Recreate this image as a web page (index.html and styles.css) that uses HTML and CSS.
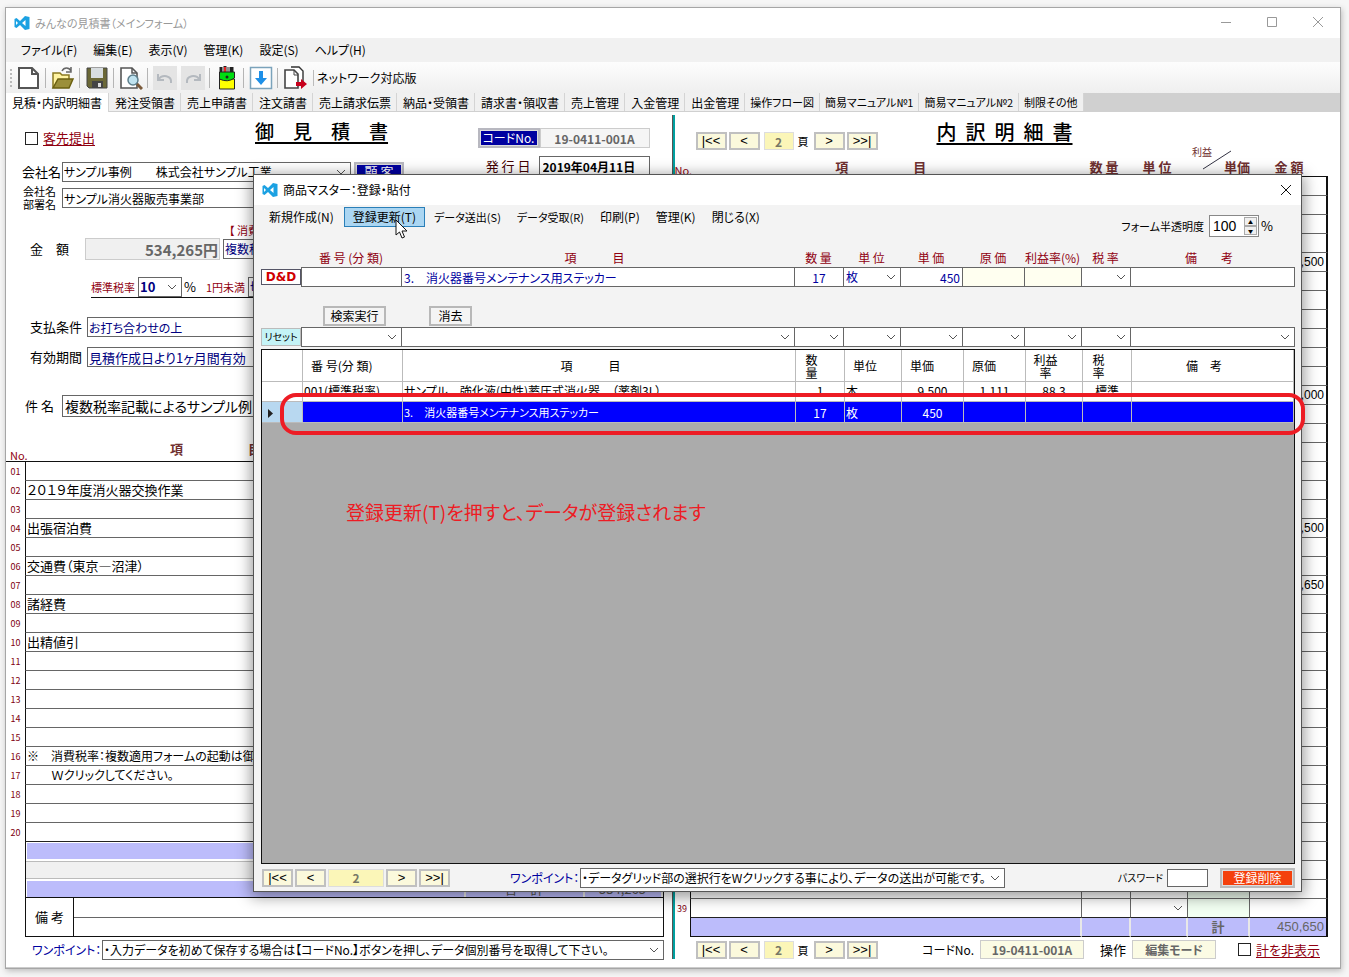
FILE: index.html
```html
<!DOCTYPE html>
<html lang="ja">
<head>
<meta charset="utf-8">
<title>みんなの見積書（メインフォーム）</title>
<link rel="stylesheet" href="styles.css">
</head>
<body>
<main class="window">
  <header class="titlebar">
    <svg class="logo" viewBox="0 0 16 16" width="16" height="16"><path fill="#1ba1e2" fill-rule="evenodd" d="M11 1 15.500 2v12L11 15 6 10 2.500 13 .5 12V4L2.500 3 6 6zM11.500 5 8 8l3.500 3zM2 6v4l2-2z"/></svg>
    <span class="titlebar-text">みんなの見積書（メインフォーム）</span>
    <div class="win-buttons">
      <button class="win-button" aria-label="最小化"><svg width="12" height="12"><path d="M1 6.500h10"/></svg></button>
      <button class="win-button" aria-label="最大化"><svg width="12" height="12"><path d="M1.500 1.500h9v9h-9z"/></svg></button>
      <button class="win-button" aria-label="閉じる"><svg width="12" height="12"><path d="M1 1l10 10M11 1L1 11"/></svg></button>
    </div>
  </header>

  <nav class="menubar">
    <button class="menu-item">ファイル(F)</button>
    <button class="menu-item">編集(E)</button>
    <button class="menu-item">表示(V)</button>
    <button class="menu-item">管理(K)</button>
    <button class="menu-item">設定(S)</button>
    <button class="menu-item">ヘルプ(H)</button>
  </nav>

  <div class="toolbar">
    <span class="grip"></span>
    <button class="tool" aria-label="新規"><svg width="24" height="24" viewBox="0 0 24 24"><path d="M2 2h13l6 6v14H2z" fill="#fff" stroke="#555" stroke-width="2"/><path d="M15 2v6h6" fill="none" stroke="#555" stroke-width="2"/></svg></button>
    <button class="tool" aria-label="開く"><svg width="24" height="24" viewBox="0 0 24 24"><path d="M2 22V7h7l2 2h7v4" fill="#fff3a0" stroke="#8a7a20" stroke-width="1.500"/><path d="M2 22l5-9h15l-4 9z" fill="#9b8f3a" stroke="#6b6010" stroke-width="1.500"/><path d="M11 5c2-4 7-4 9 0M20 1v5h-5" fill="none" stroke="#666" stroke-width="1.500"/></svg></button>
    <button class="tool" aria-label="保存"><svg width="24" height="24" viewBox="0 0 24 24"><path d="M2 2h20v20H4l-2-2z" fill="#6b6837" stroke="#444"/><path d="M6 2h12v10H6z" fill="#d8dde0"/><path d="M7 15h11v7H7z" fill="#444"/><path d="M13 17h3v4h-3z" fill="#ddd"/></svg></button>
    <button class="tool" aria-label="プレビュー"><svg width="24" height="24" viewBox="0 0 24 24"><path d="M2 2h11l5 5v15H2z" fill="#fff" stroke="#555" stroke-width="1.600"/><path d="M13 2v5h5" fill="none" stroke="#555" stroke-width="1.500"/><circle cx="14" cy="14" r="5" fill="#bfe3f0" stroke="#5e7f8c" stroke-width="1.500"/><path d="M18 18l5 5" stroke="#7a5a3a" stroke-width="3"/></svg></button>
    <button class="tool tool-off" disabled aria-label="元に戻す"><svg width="24" height="24" viewBox="0 0 24 24"><path d="M5 8v6h6M5 14c4-6 14-5 13 3" fill="none" stroke="#b4b9bf" stroke-width="2"/></svg></button>
    <button class="tool tool-off tool-next" disabled aria-label="やり直し"><svg width="24" height="24" viewBox="0 0 24 24"><path d="M19 8v6h-6M19 14C15 8 5 9 6 17" fill="none" stroke="#b4b9bf" stroke-width="2"/></svg></button>
    <button class="tool" aria-label="筆箱"><svg width="24" height="24" viewBox="0 0 24 24"><path d="M6 1v6M10 0v7M14 1v6M17 1v6" stroke="#222" stroke-width="3"/><path d="M10 1v5" stroke="#e22" stroke-width="2"/><path d="M14 1v5" stroke="#fff"/><path d="M4.500 13h15v10h-15z" fill="#ff0" stroke="#222"/><path d="M4.500 6h15v6q-7 5-15 1z" fill="#0d1" stroke="#222"/><circle cx="12" cy="11" r="1.500" fill="#222"/></svg></button>
    <button class="tool" aria-label="取り込み"><svg width="24" height="24" viewBox="0 0 24 24"><path d="M1.500 1.500h21v21h-21z" fill="#fff" stroke="#7ba3bb" stroke-width="1.500"/><path d="M10 5h4v7h4l-6 7-6-7h4z" fill="#1e90e8"/></svg></button>
    <button class="tool" aria-label="書き出し"><svg width="24" height="24" viewBox="0 0 24 24"><path d="M8 1h8l4 4v14" fill="#fff" stroke="#333" stroke-width="1.400"/><path d="M2 4h9l4 4v14H2z" fill="#fff" stroke="#444" stroke-width="1.600"/><path d="M11 4v5h4" fill="none" stroke="#444"/><path d="M13 16h5v-3l6 5-6 5v-3h-5z" fill="#c8001c"/></svg></button>
    <span class="edition">ネットワーク対応版</span>
  </div>

  <nav class="tabs">
    <button class="tab tab-on">見積・内訳明細書</button><button class="tab">発注受領書</button><button class="tab">売上申請書</button><button class="tab">注文請書</button><button class="tab">売上請求伝票</button><button class="tab">納品・受領書</button><button class="tab">請求書・領収書</button><button class="tab">売上管理</button><button class="tab">入金管理</button><button class="tab">出金管理</button><button class="tab tab-small">操作フロー図</button><button class="tab tab-small">簡易マニュアル№1</button><button class="tab tab-small">簡易マニュアル№2</button><button class="tab tab-small">制限その他</button>
  </nav>

  <div class="panes">
    <section class="pane estimate">
      <div class="form">
        <div class="form-main">
          <div class="row row-title">
            <input class="check" type="checkbox" id="submit">
            <label class="check-label" for="submit">客先提出</label>
            <h1 class="doc-title">御　見　積　書</h1>
          </div>
          <div class="row row-company">
            <label class="label-s" for="company">会社名</label>
            <select class="select company" id="company"><option>サンプル事例　　株式会社サンプル工業</option></select>
            <button class="blue-button client">顧 客</button>
          </div>
          <div class="row row-dept">
            <label class="label-two" for="dept">会社名<br>部署名</label>
            <input class="field dept grow" id="dept" value="サンプル消火器販売事業部">
          </div>
          <div class="note-red">【 消費税 】</div>
          <div class="row row-amount">
            <label class="label-amount" for="amount">金　額</label>
            <input class="field amount" id="amount" value="534,265円" readonly>
            <select class="select navy taxmode" aria-label="税率区分"><option>複数税率</option></select>
          </div>
          <div class="row row-tax">
            <label class="red-s" for="rate">標準税率</label>
            <select class="select navy rate" id="rate"><option>10</option></select>
            <span>%</span>
            <label class="red-s under" for="round">1円未満</label>
            <select class="select navy round" id="round"><option>切捨て</option></select>
          </div>
          <div class="row row-pay">
            <label class="label-m" for="pay">支払条件</label>
            <input class="field navy small grow" id="pay" value="お打ち合わせの上">
          </div>
          <div class="row row-valid">
            <label class="label-m" for="valid">有効期間</label>
            <input class="field navy grow" id="valid" value="見積作成日より1ヶ月間有効">
          </div>
          <div class="row row-subject">
            <label class="label-subject" for="subject">件 名</label>
            <input class="field subject grow" id="subject" value="複数税率記載によるサンプル例">
          </div>
        </div>
        <div class="form-side">
          <div class="side-row">
            <button class="blue-button code-button">コードNo.</button>
            <input class="field code" value="19-0411-001A" aria-label="コードNo." readonly>
          </div>
          <div class="side-row">
            <label class="issue" for="issue">発 行 日</label>
            <input class="field date" id="issue" value="2019年04月11日">
          </div>
        </div>
      </div>
      <table class="lines lines-left">
        <colgroup><col class="c-no"><col></colgroup>
        <thead><tr><th class="no-head">No.</th><th class="item-head">項　　　　　目</th></tr></thead>
        <tbody id="left-lines"></tbody>
      </table>
      <div class="sums">
        <div class="sum"></div><div class="sum-gap"></div>
        <div class="sum sum-cells"><span></span><span>合　計</span><span>534,265</span></div>
      </div>
      <div class="remarks">
        <div class="remarks-label">備 考</div>
        <div class="remarks-lines"><input class="plain" aria-label="備考1"><input class="plain" aria-label="備考2"></div>
      </div>
      <div class="tip-row">
        <label class="tip-label" for="tip">ワンポイント：</label>
        <select class="select tip" id="tip"><option>・入力データを初めて保存する場合は【コードNo.】ボタンを押し、データ個別番号を取得して下さい。</option></select>
      </div>
    </section>

    <div class="divider"></div>

    <section class="pane detail">
      <div class="detail-top">
        <div class="pager">
          <button class="page-button">|&lt;&lt;</button><button class="page-button">&lt;</button>
          <input class="page-no" value="2" aria-label="頁番号"><span class="page-unit">頁</span>
          <button class="page-button">&gt;</button><button class="page-button">&gt;&gt;|</button>
        </div>
        <h2 class="doc-title detail-title">内&nbsp; 訳&nbsp; 明&nbsp; 細&nbsp; 書</h2>
      </div>
      <table class="lines lines-right">
        <colgroup><col class="c-no2"><col><col class="c-qty"><col class="c-unit"><col class="c-price"><col class="c-sum"></colgroup>
        <thead><tr>
          <th class="no-head">No.</th><th class="item-head">項　　　　　目</th><th class="narrow">数 量</th><th class="narrow">単 位</th>
          <th class="price-head"><span class="profit">利益</span><svg class="slash" width="30" height="20"><path d="M1 19L29 1" stroke="#334"/></svg>単価</th><th>金 額</th>
        </tr></thead>
        <tbody id="right-lines"></tbody>
        <tfoot><tr><th></th><td></td><td></td><td></td><td class="total-label">計</td><td class="total">450,650</td></tr></tfoot>
      </table>
      <div class="detail-foot">
        <div class="pager">
          <button class="page-button">|&lt;&lt;</button><button class="page-button">&lt;</button>
          <input class="page-no" value="2" aria-label="頁番号"><span class="page-unit">頁</span>
          <button class="page-button">&gt;</button><button class="page-button">&gt;&gt;|</button>
        </div>
        <label class="foot-code" for="code2">コードNo.</label>
        <input class="field pale code2" id="code2" value="19-0411-001A" readonly>
        <label class="foot-mode" for="mode">操作</label>
        <input class="field pale mode" id="mode" value="編集モード" readonly>
        <span class="hide-total"><input class="check" type="checkbox" id="hide"><label class="check-label" for="hide">計を非表示</label></span>
      </div>
    </section>
  </div>

  <section class="dialog" role="dialog" aria-label="商品マスター">
    <header class="dialog-title">
      <svg class="logo" viewBox="0 0 16 16" width="16" height="16"><path fill="#1ba1e2" fill-rule="evenodd" d="M11 1 15.500 2v12L11 15 6 10 2.500 13 .5 12V4L2.500 3 6 6zM11.500 5 8 8l3.500 3zM2 6v4l2-2z"/></svg>
      <span>商品マスター：登録・貼付</span>
      <button class="dialog-close" aria-label="閉じる"><svg width="12" height="12"><path d="M1 1l10 10M11 1L1 11" stroke="#111"/></svg></button>
    </header>
    <div class="dialog-menu">
      <nav class="dialog-nav">
        <button class="menu-item">新規作成(N)</button>
        <button class="menu-item menu-hot">登録更新(T)<svg class="cursor" width="13" height="20" viewBox="0 0 13 20"><path d="M1 1v15l3.500-3 2.500 6 2.500-1-2.500-6H12z" fill="#fff" stroke="#111"/></svg></button>
        <button class="menu-item menu-kana">データ送出(S)</button>
        <button class="menu-item menu-kana">データ受取(R)</button>
        <button class="menu-item">印刷(P)</button>
        <button class="menu-item">管理(K)</button>
        <button class="menu-item">閉じる(X)</button>
      </nav>
      <label class="opacity-label" for="opacity">フォーム半透明度</label>
      <span class="spinner"><input class="spin-value" id="opacity" value="100"><span class="spin-buttons"><button class="spin" aria-label="増やす">▲</button><button class="spin" aria-label="減らす">▼</button></span></span>
      <span>%</span>
    </div>
    <div class="cols col-labels">
      <span></span><span>番 号 (分 類)</span><span class="item-label">項　　　目</span><span>数 量</span><span>単 位</span><span>単 価</span><span>原 価</span><span>利益率(%)</span><span>税 率</span><span class="note-label">備　　考</span>
    </div>
    <div class="cols entry">
      <button class="dnd">D&amp;D</button>
      <input class="cell" aria-label="番号"><input class="cell" aria-label="項目" value="3.　消火器番号メンテナンス用ステッカー">
      <input class="cell center" aria-label="数量" value="17"><select class="cell arrow" aria-label="単位"><option>枚</option></select>
      <input class="cell right" aria-label="単価" value="450"><input class="cell ivory" aria-label="原価"><input class="cell ivory" aria-label="利益率">
      <select class="cell arrow" aria-label="税率"><option></option></select><input class="cell" aria-label="備考">
    </div>
    <div class="search">
      <button class="gray-button">検索実行</button><button class="gray-button clear">消去</button>
    </div>
    <div class="cols entry">
      <button class="reset">リセット</button>
      <select class="cell arrow" aria-label="番号検索"></select><select class="cell arrow" aria-label="項目検索"></select><select class="cell arrow" aria-label="数量検索"></select>
      <select class="cell arrow" aria-label="単位検索"></select><select class="cell arrow" aria-label="単価検索"></select><select class="cell arrow" aria-label="原価検索"></select>
      <select class="cell arrow" aria-label="利益率検索"></select><select class="cell arrow" aria-label="税率検索"></select><select class="cell arrow" aria-label="備考検索"></select>
    </div>
    <div class="datagrid">
      <table class="products">
        <colgroup><col class="p-mark"><col class="p-num"><col><col class="p-qty"><col class="p-unit"><col class="p-cost"><col class="p-cost"><col class="p-unit"><col class="p-qty"><col class="p-note"></colgroup>
        <thead><tr><th></th><th class="left">番 号(分 類)</th><th class="shift">項　　　目</th><th class="tall">数<br>量</th><th class="left pad">単位</th><th class="left">単価</th><th class="left">原価</th><th class="tall">利益<br>率</th><th class="tall">税<br>率</th><th class="shift">備　考</th></tr></thead>
        <tbody>
          <tr class="first"><td></td><td><div>001(標準税率)</div></td><td><div>サンプル　強化液(中性)蓄圧式消火器　（薬剤3L）</div></td><td class="center"><div>1</div></td><td><div>本</div></td><td class="center"><div>9,500</div></td><td class="center"><div>1,111</div></td><td class="center"><div>88.3</div></td><td class="center"><div>標準</div></td><td></td></tr>
          <tr class="picked"><td class="mark"><svg width="8" height="9"><path d="M1 0v9l5-4.500z" fill="#222"/></svg></td><td></td><td class="item">3.　消火器番号メンテナンス用ステッカー</td><td class="center">17</td><td>枚</td><td class="center">450</td><td></td><td></td><td></td><td></td></tr>
        </tbody>
      </table>
      <div class="callout"></div>
      <p class="hint">登録更新(T)を押すと、データが登録されます</p>
    </div>
    <footer class="dialog-foot">
      <div class="pager">
        <button class="page-button">|&lt;&lt;</button><button class="page-button">&lt;</button>
        <input class="page-no page-wide" value="2" aria-label="頁番号">
        <button class="page-button">&gt;</button><button class="page-button">&gt;&gt;|</button>
      </div>
      <label class="tip-label foot-tip" for="tip2">ワンポイント：</label>
      <select class="select tip2" id="tip2"><option>・データグリッド部の選択行をWクリックする事により、データの送出が可能です。</option></select>
      <label class="pass-label" for="pass">パスワード</label>
      <input class="field pass" id="pass" type="password">
      <button class="delete">登録削除</button>
    </footer>
  </section>
</main>
<script src="app.js"></script>
</body>
</html>
```

FILE: styles.css
```css
* { box-sizing: border-box; }
body {
  margin: 0;
  padding: 7px 8px 8px 5px;
  background: #f6f6f6;
  color: #000;
  font: 13px/16px "Noto Sans CJK JP", sans-serif;
  font-feature-settings: "palt";
}
button, input, select { font: inherit; font-feature-settings: inherit; color: inherit; margin: 0; padding: 0; border-radius: 0; min-width: 0; }
button { white-space: nowrap; }
h1, h2, p { margin: 0; }

.window { position: relative; display: flex; flex-direction: column; background: #fff; border: 1px solid #a6a6a6; box-shadow: 1px 2px 6px #bbb; }
.titlebar { display: flex; align-items: center; height: 30px; padding-left: 8px; color: #999; font-size: 11px; }
.titlebar-text { margin-left: 5px; }
.win-buttons { display: flex; gap: 22px; margin-left: auto; padding-right: 10px; }
.win-button { width: 24px; height: 24px; border: 0; background: none; }
.win-button path { fill: none; stroke: #999; }

.menubar { display: flex; align-items: center; height: 24px; padding-left: 7px; background: #f1f1f1; }
.menu-item { height: 20px; padding: 0 8px; border: 0; background: none; font-size: 12px; line-height: 18px; }
.toolbar { display: flex; align-items: center; height: 31px; background: linear-gradient(#fdfdfd, #efefef); }
.grip { width: 2px; height: 18px; margin-left: 4px; border-left: 2px dotted #bbb; }
.tool { position: relative; display: flex; width: 24px; height: 24px; margin: 0 5px; border: 0; background: none; }
.tool + .tool::before { content: ""; position: absolute; left: -6px; top: 2px; width: 1px; height: 20px; background: #b5b5b5; }
.tool-off { background: #e4e4e4; }
.tool.tool-next { margin-left: -1px; }
.tool.tool-next::before { display: none; }
.edition { margin-left: 1px; padding-left: 3px; border-left: 1px solid #bbb; font-size: 12px; }

.tabs { display: flex; height: 19px; background: #d0d0d0; }
.tab { height: 18px; padding: 0 5px 0 6px; border: 0; border-right: 1px solid #d4d4d4; background: #f0f0f0; font-size: 12px; line-height: 17px; }
.tab-on { height: 19px; padding-right: 6px; background: #fff; }
.tab-small { padding: 0 5px; font-size: 11px; }

.panes { display: grid; grid-template-columns: minmax(0, 1fr) 3px minmax(0, 1fr); padding-bottom: 5px; border-bottom: 1px solid #ccc; }
.divider { margin: 3px 0; border-left: 1px solid #555; background: #00a0a0; }

.row { display: flex; align-items: center; height: 20px; }
.field, .select { height: 20px; border: 1px solid #666; background-color: #fff; padding: 0 1px; line-height: 16px; outline: 0; }
.select, .arrow {
  appearance: none;
  background-image: url("data:image/svg+xml,%3Csvg xmlns='http://www.w3.org/2000/svg' width='16' height='8'%3E%3Cpath d='M3 2l4 4 4-4' fill='none' stroke='%23555'/%3E%3C/svg%3E");
  background-repeat: no-repeat;
  background-position: right center;
}
.grow { flex: 1; }
.navy { color: #000080; }
.small { font-size: 12px; }
.check { appearance: none; width: 13px; height: 13px; border: 1px solid #222; background: #fff; }
.check-label { margin-left: 5px; color: #900010; text-decoration: underline; text-underline-offset: 2px; }
.doc-title { font-size: 20px; line-height: 24px; font-weight: 500; text-decoration: underline 2px; text-underline-offset: 3px; font-feature-settings: normal; white-space: pre; }
.red-s { color: #900010; font-size: 11px; }

.form { display: grid; grid-template-columns: 398px 1fr; height: 324px; padding-top: 7px; }
.row-title { height: 38px; padding-left: 19px; }
.row-title .doc-title { margin: -14px 0 0 160px; font-size: 19px; }
.row-company { margin-top: 5px; padding-left: 16px; }
.label-s { width: 40px; }
.company { width: 290px; font-size: 12px; }
.dept { font-size: 12px; }
.client { width: 50px; margin-left: 3px; }
.row-dept { margin-top: 6px; padding-left: 17px; }
.label-two { width: 39px; font-size: 11px; line-height: 13px; }
.note-red { margin-top: 14px; padding-left: 223px; color: #900010; font-size: 11px; }
.row-amount { height: 22px; padding-left: 24px; }
.label-amount { width: 55px; }
.amount { width: 135px; height: 22px; border-color: #ccc; background: #f0f0f0; color: #666; font-size: 15px; font-weight: 700; text-align: right; }
.taxmode { flex: 1; margin-left: 3px; font-size: 12px; }
.row-tax { height: 22px; margin: 16px 0 0 85px; border-bottom: 1px solid #111; }
.rate { width: 44px; margin: 0 2px 0 3px; font-weight: 700; }
.under { margin: 0 3px 0 10px; }
.round { flex: 1; }
.row-pay { margin-top: 19px; padding-left: 24px; }
.row-valid { margin-top: 10px; padding-left: 24px; }
.label-m { width: 57px; }
.row-subject { height: 22px; margin-top: 28px; padding-left: 19px; }
.label-subject { width: 37px; }
.subject { height: 22px; padding-left: 2px; font-size: 14px; }

.form-side { display: flex; flex-direction: column; gap: 8px; padding: 9px 22px 0 0; }
.side-row { display: flex; justify-content: flex-end; align-items: center; }
.blue-button { border: 2px solid #b8b8c0; outline: 0; background: #0000a0; box-shadow: inset 0 0 0 1px #ddd; color: #fff; height: 20px; line-height: 14px; }
.code-button { width: 62px; font-size: 12px; }
.code { width: 110px; border-color: #ccc; background: #f5f5f5; color: #666; font-size: 12px; font-weight: 700; text-align: center; }
.issue { margin-right: 8px; color: #400; }
.date { width: 111px; padding-left: 3px; font-weight: 700; font-size: 12px; }

.lines { width: 100%; table-layout: fixed; border-spacing: 0; }
.lines th, .lines td { padding: 0; font-weight: 400; line-height: 18px; height: 19px; overflow: hidden; white-space: pre; }
.lines thead th { color: #703030; font-weight: 700; vertical-align: bottom; }
.lines thead .no-head { color: #900010; font-size: 11px; font-weight: 400; text-align: left; line-height: 12px; overflow: visible; }
.lines tbody th { color: #800010; font-size: 9px; }
.lines tbody td { border-bottom: 1px solid #666; }
.lines tbody tr:last-child td { border-bottom-color: #222; }
.lines tbody tr:first-child td, .lines tbody tr:first-child th { border-top: 1px solid #111; height: 20px; }
.c-no { width: 19px; }
.lines-left { width: calc(100% - 8px); }
.lines-left .no-head { padding-left: 4px; }
.lines-left .item-head { height: 25px; padding-left: 145px; text-align: left; vertical-align: middle; }
.lines-left td { border-left: 1px solid #111; padding-left: 1px; }
.lines-left .remark-line { font-size: 12px; }
.sums { margin: 0 8px 0 19px; border: solid #111; border-width: 0 1px 1px; padding: 1px 0 0; }
.sum { height: 16px; margin-left: 1px; background: #bcbcfb; }
.sum-gap { height: 18px; margin: 2px 0; border: solid #bbb; border-width: 1px 0; background: #f0f0f0; }
.sum-cells { display: grid; grid-template-columns: 1fr 119px 78px; }
.sum-cells span { border-right: 2px solid #eee; text-align: center; color: #555; }
.remarks { display: flex; margin: 0 8px 0 19px; height: 39px; border: solid #111; border-width: 0 1px 1px; }
.remarks-label { width: 48px; border-right: 1px solid #111; line-height: 37px; text-align: center; }
.remarks-lines { flex: 1; display: flex; flex-direction: column; }
.plain { flex: 1; width: 100%; border: 0; outline: 0; background: none; }
.plain:first-child { border-bottom: 1px solid #666; }
.tip-row { display: flex; align-items: center; margin: 3px 8px 2px 26px; }
.tip-label { width: 70px; color: #0000a0; font-size: 12px; white-space: nowrap; }
.tip { flex: 1; font-size: 12px; }

.detail { padding-right: 12px; }
.detail-top { display: flex; height: 44px; padding: 8px 0 0 21px; }
.detail-title { margin-left: 59px; }
.pager { display: flex; align-items: center; gap: 2px; }
.page-button { width: 31px; height: 18px; border: 2px solid #c0c0c0; background: #fbf9dc; font-family: "Liberation Sans", sans-serif; line-height: 12px; }
.page-no { width: 30px; height: 18px; margin: 0 2px; border: 1px solid #ddd; background: #fbf6b8; color: #776; font-size: 12px; font-weight: 700; line-height: 14px; text-align: center; }
.page-unit { font-size: 11px; margin-right: 3px; }
.detail-top .pager { height: 42px; }
.c-no2 { width: 15px; }
.c-qty { width: 49px; }
.c-unit { width: 57px; }
.c-price { width: 62px; }
.c-sum { width: 78px; }
.lines-right thead th { height: 20px; }
.lines-right .item-head { padding-right: 10px; }
.lines-right .narrow { padding-right: 5px; }
.lines thead .price-head { position: relative; overflow: visible; text-align: right; }
.profit { position: absolute; left: 4px; top: -11px; font-size: 10px; font-weight: 400; line-height: 14px; }
.slash { position: absolute; left: 14px; top: -6px; }
.lines-right td { border-right: 1px solid #666; text-align: right; }
.lines-right td:nth-child(2) { border-left: 1px solid #111; }
.lines-right td:last-child { border-right: 2px solid #111; padding-right: 2px; font-family: "Liberation Sans", sans-serif; font-size: 12px; }
.lines-right .mint { background: #f2fff2; }
.lines-right .arrow { background-color: transparent; }
.lines-right tfoot td { height: 19px; border-right: 2px solid #e8e8e8; border-bottom: 1px solid #111; background: #bcbcfb; color: #666; }
.lines-right tfoot .total-label { text-align: center; font-weight: 700; }
.lines-right tfoot td.total { font-size: 13px; }
.detail-foot { display: flex; align-items: center; height: 25px; padding-left: 21px; }
.foot-code { margin-left: auto; font-size: 12px; }
.code2 { width: 104px; margin-left: 6px; }
.pale { height: 19px; border-color: #ccc; background: #fbfbe4; color: #666; font-size: 12px; font-weight: 700; text-align: center; }
.foot-mode { margin-left: 16px; }
.mode { width: 84px; margin-left: 6px; }
.hide-total { display: flex; align-items: center; margin: 0 8px 0 22px; white-space: nowrap; }

.dialog { position: absolute; top: 166px; right: 38px; bottom: 76px; left: 247px; display: flex; flex-direction: column; border: 1px solid #555; background: #f3f3f3; box-shadow: 0 3px 14px 2px rgba(0, 0, 0, .4); }
.dialog-title { display: flex; align-items: center; gap: 5px; height: 30px; padding: 0 9px 0 8px; background: #fff; font-size: 12px; }
.dialog-close { display: flex; margin-left: auto; border: 0; background: none; }
.dialog-menu { display: flex; align-items: center; height: 42px; padding: 0 28px 0 7px; }
.dialog-nav { display: flex; align-self: flex-start; margin: 2px auto 0 0; }
.dialog-nav .menu-item { padding: 0 7px; border: 1px solid transparent; }
.dialog-nav .menu-hot { position: relative; margin: 0 1px 0 2px; padding: 0 8px; border-color: #2a7fb8; background: #abd6f2; }
.dialog-nav .menu-kana { font-size: 11px; }
.cursor { position: absolute; left: 50px; top: 11px; z-index: 1; }
.opacity-label { margin-right: 5px; font-size: 11px; }
.spinner { display: flex; height: 22px; width: 50px; margin-right: 2px; border: 1px solid #888; background: #fff; }
.spin-value { flex: 1; width: 30px; padding-left: 3px; border: 0; background: none; font: 14px "Liberation Sans", sans-serif; }
.spin-buttons { display: flex; flex-direction: column; width: 15px; padding: 1px; }
.spin { flex: 1; border: 1px solid #aaa; background: #f0f0f0; font-size: 5px; line-height: 5px; }
.cols { display: grid; grid-template-columns: 40px 100px minmax(0, 1fr) 49px 57px 62px 62px 57px 49px 164px; margin: 0 7px; }
.col-labels { height: 20px; line-height: 22px; color: #900010; font-size: 12px; text-align: center; white-space: pre; }
.item-label, .note-label { padding-right: 6px; }
.entry { align-items: center; }
.cell { width: calc(100% + 1px); height: 20px; border: 1px solid #666; background-color: #fff; padding: 0 2px; color: #0000a0; font-size: 12px; line-height: 16px; outline: 0; }
.center { text-align: center; }
.right { text-align: right; }
.left { text-align: left; }
.ivory { background-color: #fffff0; }
.dnd { height: 16px; border: 1px solid #556; background: #fff; color: #d00000; font: 700 12px/14px "DejaVu Sans", sans-serif; }
.search { display: flex; gap: 43px; margin: 19px 0 1px 69px; }
.gray-button { height: 20px; width: 63px; border: 2px solid #b8b8b8; background: #f4f4f4; font-size: 12px; line-height: 16px; }
.clear { width: 43px; }
.reset { height: 18px; border: 1px solid #bbb; background: #c4f3f6; font-size: 10px; line-height: 16px; }
.datagrid { position: relative; flex: 1; min-height: 0; margin: 2px 6px 0 7px; border: 1px solid #111; background: #ababab; }
.products { width: 100%; table-layout: fixed; border-spacing: 0; font-size: 12px; }
.products th, .products td { padding: 0 1px; height: 21px; border: solid #bbb; border-width: 0 1px 1px 0; line-height: 19px; font-weight: 400; white-space: pre; overflow: hidden; }
.products th { height: 32px; background: #fff; line-height: 30px; }
.products .left { padding-left: 8px; }
.products .shift { padding-right: 18px; }
.products .tall { line-height: 13px; padding-right: 18px; }
.products .item { font-size: 11px; }
.first td { height: 20px; background: #fff; vertical-align: top; }
.first div { height: 12px; line-height: 17px; overflow: hidden; }
.picked td { background: #00f; color: #fff; }
.picked .mark { background: #b8d8f0; padding-left: 5px; }
.p-mark { width: 41px; }
.p-num { width: 100px; }
.p-qty { width: 49px; }
.p-unit { width: 57px; }
.p-cost { width: 62px; }
.p-note { width: 162px; }
.callout { position: absolute; top: 43px; left: 18px; right: -11px; height: 42px; border: 4px solid #ed1c24; border-radius: 16px; }
.hint { position: absolute; top: 149px; left: 84px; color: #ed1c24; font-size: 19px; line-height: 26px; white-space: nowrap; }
.dialog-foot { display: flex; align-items: center; height: 27px; padding: 0 6px 0 8px; }
.page-wide { width: 56px; margin: 0; }
.foot-tip { margin-left: 60px; }
.tip2 { width: 425px; font-size: 12px; }
.pass-label { margin-left: auto; font-size: 10px; }
.pass { width: 41px; height: 18px; margin: 0 12px 0 4px; }
.delete { width: 75px; height: 20px; border: 2px solid #bbb; background: #f4400c; box-shadow: inset 0 0 0 1px #ddd; color: #fff; font-size: 12px; line-height: 14px; }
```

FILE: app.js
```js
const pad = n => String(n).padStart(2, "0");

const items = {
  2: "２０１９年度消火器交換作業",
  4: "出張宿泊費",
  6: "交通費（東京―沼津）",
  8: "諸経費",
  10: "出精値引",
  16: "※　消費税率：複数適用フォームの起動は御",
  17: "　　Ｗクリックしてください。"
};
let left = "";
for (let i = 1; i <= 20; i++) {
  const kind = i > 15 ? ' class="remark-line"' : "";
  left += `<tr><th>${pad(i)}</th><td${kind}>${items[i] || ""}</td></tr>`;
}
document.getElementById("left-lines").innerHTML = left;

// Line numbers behind the open dialog are left blank.
const lastLine = 39;
const sums = { 5: ",500", 12: ",000", 19: ",500", 22: ",650" };
let right = "";
for (let i = 1; i <= lastLine; i++) {
  right += `<tr><th>${i === lastLine ? i : ""}</th><td></td><td></td><td class="arrow"></td><td class="mint"></td><td>${sums[i] || ""}</td></tr>`;
}
document.getElementById("right-lines").innerHTML = right;
```
